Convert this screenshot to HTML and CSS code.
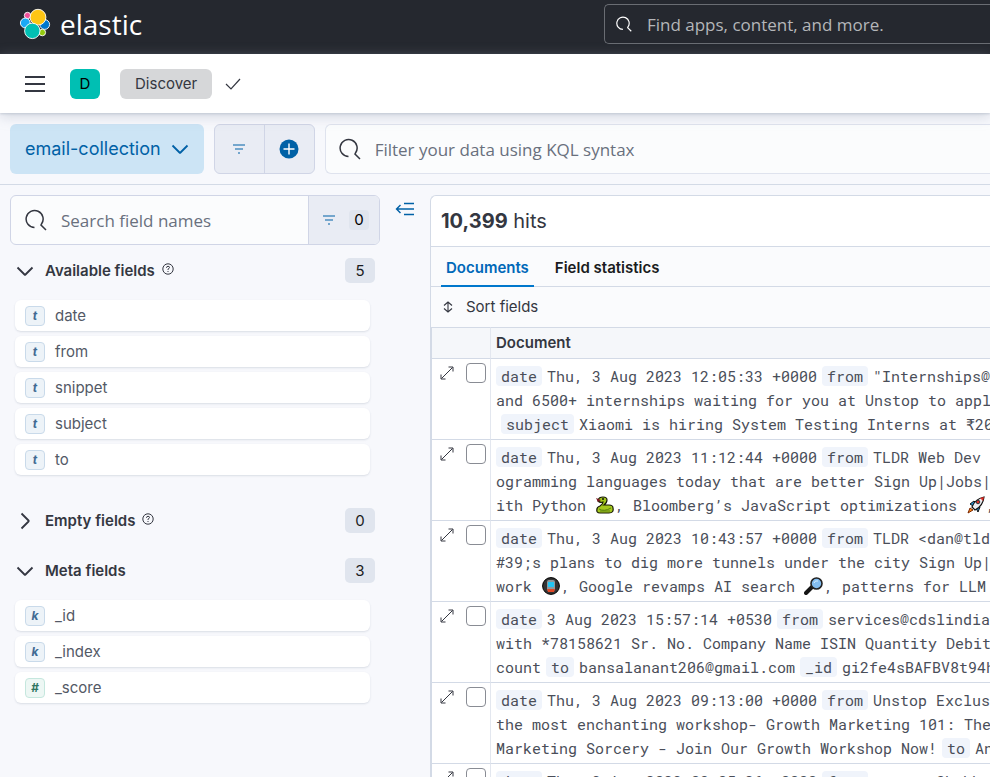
FILE: index.html
```html
<!DOCTYPE html>
<html lang="en">
<head>
<meta charset="utf-8">
<title>Discover - Elastic</title>
<link rel="stylesheet" href="styles.css">
</head>
<body>
<svg class="defs" aria-hidden="true">
  <symbol id="magnifier" viewBox="0 0 22 22"><path d="M9.500 18.500A8.500 8.500 0 1 1 16.500 15L16 16L21 21" /></symbol>
  <symbol id="chevron" viewBox="0 0 18 18"><path d="M1.500 5.500L8.500 12.500Q9 13 9.500 12.500L16.500 5.500" /></symbol>
  <symbol id="filter" viewBox="0 0 14 12"><path d="M1 2H13M3 6H11M6 10H8" /></symbol>
  <symbol id="help" viewBox="0 0 12 12"><circle cx="6" cy="6" r="5.200" /><path d="M4.500 4.800Q4.500 3.300 6 3.300Q7.500 3.300 7.500 4.500Q7.500 5.300 6 6.200V7M6 8V9" /></symbol>
  <symbol id="expand" viewBox="0 0 14 14"><path d="M8.500 1H13V5.500M5.500 13H1V8.500M12.500 1.500L1.500 12.500" /></symbol>
  <symbol id="snake" viewBox="0 0 20 18"><path d="M3 4Q4 1 8 1Q12 1 12 4Q12 7 9 9H14Q18 9 18 12Q19 17 14 17H5Q1 17 2 13Q2 11 5 10Q8 8 8 6Q5 7 3 5Z" fill="#a4c91c" stroke="#171a05" stroke-width="1.200"/><path d="M4 13Q9 16 16 12M5 15H15" fill="none" stroke="#5c8210"/><path d="M1 2L6 4L3 6Z" fill="#7a1622"/><circle cx="8" cy="3" r="1" fill="#111"/></symbol>
  <symbol id="rocket" viewBox="0 0 20 18"><path d="M4 8L8 5L14 11L12 16L10 12L7 10Z" fill="#2496d8" stroke="#111"/><path d="M6 11Q9 3 18 1Q17 10 9 14Z" fill="#eceff2" stroke="#111" stroke-width="1.200"/><path d="M14 2L18 1L17 5Z" fill="#df3028"/><circle cx="12" cy="6" r="1.800" fill="#df3028" stroke="#333"/><path d="M2 17L4 12L7 14Z" fill="#ff8c17" stroke="#7a2500"/></symbol>
  <symbol id="train" viewBox="0 0 20 18"><circle cx="10" cy="9" r="8.400" fill="#333" stroke="#000"/><rect x="6" y="3" width="8" height="11" rx="2" fill="#8d989c"/><rect x="7" y="5" width="6" height="5" fill="#22c5f3"/><path d="M6 12H14L13 15H7Z" fill="#e04726"/></symbol>
  <symbol id="lens" viewBox="0 0 20 18"><path d="M8 10L2 16" stroke="#151515" stroke-width="4" stroke-linecap="round"/><circle cx="12.500" cy="6.500" r="5.500" fill="#83bdf0" stroke="#222" stroke-width="1.600"/><path d="M10 6Q11 3 14 4" fill="none" stroke="#d5edff"/></symbol>
</svg>

<header class="topbar">
  <a class="brand" href="#">
    <svg class="brand-mark" viewBox="0 0 30 30" aria-hidden="true">
      <g stroke="#fff" stroke-width="0.900">
        <circle cx="7.500" cy="6.500" r="3.200" fill="#f04e98"/>
        <circle cx="5.300" cy="14" r="4.900" fill="#1ba9f5"/>
        <circle cx="24.700" cy="15.500" r="4.900" fill="#0077cc"/>
        <circle cx="22.300" cy="23.500" r="3.300" fill="#93c90e"/>
        <circle cx="18" cy="8.200" r="7.900" fill="#fec514"/>
        <circle cx="12.300" cy="21.900" r="7.700" fill="#00bfb3"/>
      </g>
    </svg>
    <span class="brand-name">elastic</span>
  </a>
  <label class="global-search">
    <svg class="icon icon-16" aria-hidden="true"><use href="#magnifier"/></svg>
    <input type="search" aria-label="Find apps" placeholder="Find apps, content, and more.">
  </label>
</header>

<nav class="navbar">
  <button class="menu" aria-label="Menu"><svg viewBox="0 0 20 16" aria-hidden="true"><path d="M0 1H20M0 8H20M0 15H20"/></svg></button>
  <button class="space">D</button>
  <a class="crumb" href="#">Discover</a>
  <button class="check" aria-label="Saved"><svg class="icon icon-16" viewBox="0 0 16 16" aria-hidden="true"><path d="M1 8L6 13L15 3"/></svg></button>
</nav>

<section class="querybar">
  <button class="dataview">email-collection<svg class="icon icon-18" aria-hidden="true"><use href="#chevron"/></svg></button>
  <div class="filter-group">
    <button aria-label="Filter menu"><svg class="icon icon-14" aria-hidden="true"><use href="#filter"/></svg></button>
    <button aria-label="Add filter"><svg class="plus" viewBox="0 0 20 20" aria-hidden="true"><circle cx="10" cy="10" r="9.500"/><path d="M10 4.500V15.500M4.500 10H15.500"/></svg></button>
  </div>
  <label class="kql">
    <svg class="icon icon-22" aria-hidden="true"><use href="#magnifier"/></svg>
    <input type="search" aria-label="Query" placeholder="Filter your data using KQL syntax">
  </label>
</section>

<main class="workspace">
  <aside class="sidebar">
    <div class="field-search">
      <label>
        <svg class="icon icon-22" aria-hidden="true"><use href="#magnifier"/></svg>
        <input type="search" aria-label="Field names" placeholder="Search field names">
      </label>
      <button aria-label="Filter by type"><svg class="icon icon-14" aria-hidden="true"><use href="#filter"/></svg><span class="count">0</span></button>
    </div>

    <section class="group">
      <button class="group-head"><svg class="icon icon-18" aria-hidden="true"><use href="#chevron"/></svg><span>Available fields</span><svg class="icon help" aria-hidden="true"><use href="#help"/></svg><span class="badge">5</span></button>
      <ul>
        <li><span class="type">t</span>date</li>
        <li><span class="type">t</span>from</li>
        <li><span class="type">t</span>snippet</li>
        <li><span class="type">t</span>subject</li>
        <li><span class="type">t</span>to</li>
      </ul>
    </section>
    <section class="group">
      <button class="group-head closed"><svg class="icon icon-18" aria-hidden="true"><use href="#chevron"/></svg><span>Empty fields</span><svg class="icon help" aria-hidden="true"><use href="#help"/></svg><span class="badge">0</span></button>
    </section>
    <section class="group">
      <button class="group-head"><svg class="icon icon-18" aria-hidden="true"><use href="#chevron"/></svg><span>Meta fields</span><span class="badge">3</span></button>
      <ul>
        <li><span class="type">k</span>_id</li>
        <li><span class="type">k</span>_index</li>
        <li><span class="type number">#</span>_score</li>
      </ul>
    </section>
  </aside>

  <button class="collapse" aria-label="Collapse sidebar"><svg viewBox="0 0 20 14" aria-hidden="true"><path d="M9 1.500H19M2 7H19M9 12.500H19M5.500 3L1.500 7L5.500 11"/></svg></button>

  <section class="results">
    <h1 class="hits"><strong>10,399</strong> hits</h1>
    <div class="tabs">
      <button class="tab active">Documents</button>
      <button class="tab">Field statistics</button>
    </div>
    <div class="toolbar">
      <button><svg class="sort" viewBox="0 0 10 12" aria-hidden="true"><path d="M5 1V11M1 4.500L5 1L9 4.500M1 7.500L5 11L9 7.500"/></svg>Sort fields</button>
    </div>
    <table class="grid">
      <thead>
        <tr><th class="control" aria-label="Controls"></th><th>Document</th></tr>
      </thead>
      <tbody>
        <tr>
          <td class="control"><div class="tools"><button aria-label="Expand"><svg class="icon icon-14" aria-hidden="true"><use href="#expand"/></svg></button><input type="checkbox" aria-label="Select row 1"></div></td>
          <td class="doc"><p><b>date</b>Thu, 3 Aug 2023 12:05:33 +0000<b>from</b>"Internships@</p><p>and 6500+ internships waiting for you at Unstop to appl</p><p><b>subject</b>Xiaomi is hiring System Testing Interns at ₹20</p></td>
        </tr>
        <tr>
          <td class="control"><div class="tools"><button aria-label="Expand"><svg class="icon icon-14" aria-hidden="true"><use href="#expand"/></svg></button><input type="checkbox" aria-label="Select row 2"></div></td>
          <td class="doc"><p><b>date</b>Thu, 3 Aug 2023 11:12:44 +0000<b>from</b>TLDR Web Dev </p><p>ogramming languages today that are better Sign Up|Jobs|</p><p>ith Python <svg class="emoji" aria-hidden="true"><use href="#snake"/></svg>, Bloomberg’s JavaScript optimizations <svg class="emoji" aria-hidden="true"><use href="#rocket"/></svg>,</p></td>
        </tr>
        <tr>
          <td class="control"><div class="tools"><button aria-label="Expand"><svg class="icon icon-14" aria-hidden="true"><use href="#expand"/></svg></button><input type="checkbox" aria-label="Select row 3"></div></td>
          <td class="doc"><p><b>date</b>Thu, 3 Aug 2023 10:43:57 +0000<b>from</b>TLDR &lt;dan@tld</p><p>#39;s plans to dig more tunnels under the city Sign Up|</p><p>work <svg class="emoji" aria-hidden="true"><use href="#train"/></svg>, Google revamps AI search <svg class="emoji" aria-hidden="true"><use href="#lens"/></svg>, patterns for LLM</p></td>
        </tr>
        <tr>
          <td class="control"><div class="tools"><button aria-label="Expand"><svg class="icon icon-14" aria-hidden="true"><use href="#expand"/></svg></button><input type="checkbox" aria-label="Select row 4"></div></td>
          <td class="doc"><p><b>date</b>3 Aug 2023 15:57:14 +0530<b>from</b>services@cdslindia</p><p>with *78158621 Sr. No. Company Name ISIN Quantity Debit</p><p>count<b>to</b>bansalanant206@gmail.com<b>_id</b>gi2fe4sBAFBV8t94h</p></td>
        </tr>
        <tr>
          <td class="control"><div class="tools"><button aria-label="Expand"><svg class="icon icon-14" aria-hidden="true"><use href="#expand"/></svg></button><input type="checkbox" aria-label="Select row 5"></div></td>
          <td class="doc"><p><b>date</b>Thu, 3 Aug 2023 09:13:00 +0000<b>from</b>Unstop Exclus</p><p>the most enchanting workshop- Growth Marketing 101: The</p><p>Marketing Sorcery - Join Our Growth Workshop Now!<b>to</b>An</p></td>
        </tr>
        <tr>
          <td class="control"><div class="tools"><button aria-label="Expand"><svg class="icon icon-14" aria-hidden="true"><use href="#expand"/></svg></button><input type="checkbox" aria-label="Select row 6"></div></td>
          <td class="doc"><p><b>date</b>Thu, 3 Aug 2023 09:05:26 +0000<b>from</b>serene Shubh</p></td>
        </tr>
      </tbody>
    </table>
  </section>
</main>
</body>
</html>
```
FILE: styles.css
```css
* { box-sizing: border-box; }

html { background: #fff; }

body {
  margin: 0 2px 0 0;
  height: 100vh;
  overflow: hidden;
  display: flex;
  flex-direction: column;
  background: #f7f8fc;
  color: #343741;
  font: 15px/24px Inter, "Liberation Sans", sans-serif;
}

button, input { font: inherit; color: inherit; }
button { border: 0; padding: 0; background: none; display: flex; align-items: center; }
a { color: inherit; text-decoration: none; }
ul, p, h1 { margin: 0; padding: 0; list-style: none; }
svg { display: block; flex: none; overflow: visible; }
.defs { position: absolute; width: 0; height: 0; }

.icon { fill: none; stroke: currentColor; stroke-width: 1.2; }
.icon-14 { width: 14px; height: 14px; }
.icon-16 { width: 16px; height: 16px; }
.icon-18 { width: 18px; height: 18px; stroke-width: 1.8; }
.icon-22 { width: 22px; height: 22px; stroke-width: 1.5; }

input[type="search"] {
  appearance: none;
  flex: 1;
  min-width: 0;
  border: 0;
  outline: 0;
  padding: 2px 0 0;
  background: none;
  font: 17px/24px "Segoe UI", "Open Sans", sans-serif;
}
input::placeholder { color: #69707d; opacity: 1; }

.topbar {
  flex: none;
  height: 54px;
  display: flex;
  justify-content: space-between;
  background: #25282f;
  color: #fff;
}
.brand { display: flex; align-items: center; gap: 10px; padding: 0 0 6px 20px; }
.brand-mark { width: 30px; height: 30px; }
.brand-name { font: 28px/32px "Open Sans", sans-serif; }
.global-search {
  width: 39%;
  height: 40px;
  margin-top: 4px;
  display: flex;
  align-items: center;
  gap: 15px;
  padding-left: 11px;
  border: 1px solid #6a6d73;
  border-right: 0;
  border-radius: 5px 0 0 5px;
}
.global-search .icon { stroke-width: 1.6; }
.global-search input::placeholder { color: #b4b6b9; }

.navbar {
  flex: none;
  height: 59px;
  display: flex;
  align-items: center;
  padding-left: 25px;
  background: #fff;
  box-shadow: 0 1px 2px #98a2b366, 0 3px 12px #98a2b366;
  z-index: 1;
}
.menu svg { width: 20px; height: 16px; stroke: #343741; stroke-width: 2; }
.space {
  width: 30px;
  height: 30px;
  margin: 0 20px 0 25px;
  justify-content: center;
  border-radius: 6px;
  background: #00bfb3;
  color: #000;
}
.crumb { padding: 3px 15px; border-radius: 6px; background: #d6d7d9; }
.check { margin-left: 13px; }

.querybar {
  flex: none;
  display: flex;
  gap: 10px;
  padding: 11px 0 10px 10px;
  border-bottom: 1px solid #d3dae6;
}
.dataview {
  height: 50px;
  padding: 0 15px;
  gap: 10px;
  border-radius: 6px;
  background: #cce4f5;
  color: #0061a6;
  font-size: 18px;
}
.filter-group {
  display: flex;
  border: 1px solid #d0d5e6;
  border-radius: 6px;
  background: #e9ecf4;
  color: #0061a6;
}
.filter-group button { width: 49px; justify-content: center; }
.filter-group button + button { width: 50px; border-left: 1px solid #d0d5e6; }
.plus { width: 20px; height: 20px; fill: #0061a6; stroke: #fff; stroke-width: 1.4; }
.plus circle { stroke: none; }
.kql {
  flex: 1;
  display: flex;
  align-items: center;
  gap: 14px;
  padding-left: 13px;
  border: 1px solid #dfe3ee;
  border-right: 0;
  border-radius: 6px 0 0 6px;
  background: #fbfcfd;
}

.workspace { flex: 1; min-height: 0; display: flex; align-items: stretch; padding-top: 10px; }

.sidebar { width: 380px; flex: none; padding-left: 10px; }
.field-search {
  height: 50px;
  display: flex;
  border: 1px solid #d0d5e6;
  border-radius: 6px;
  background: #fbfcfd;
  overflow: hidden;
}
.field-search label { flex: 1; display: flex; align-items: center; gap: 14px; padding-left: 14px; }
.field-search button {
  width: 71px;
  gap: 13px;
  padding-left: 13px;
  border-left: 1px solid #d0d5e6;
  background: #e9ecf4;
  color: #0061a6;
}
.count {
  width: 20px;
  line-height: 20px;
  border-radius: 4px;
  background: #e0e5ee;
  color: #000;
  text-align: center;
}

.group { padding: 13px 5px 0 5px; }
.group-head { width: 100%; height: 25px; font-weight: 600; }
.group-head .icon-18 { margin: 0 11px 0 1px; }
.closed .icon-18 { transform: rotate(-90deg); }
.help { width: 12px; height: 12px; margin: 0 0 4px 7px; stroke-width: 1; }
.badge {
  width: 30px;
  margin-left: auto;
  border-radius: 5px;
  background: #e0e5ee;
  color: #1a1c21;
  font-weight: 400;
  line-height: 25px;
  text-align: center;
}
.group ul { display: grid; gap: 5px; padding: 17px 5px 8px 0; }
.group li {
  height: 31px;
  display: flex;
  align-items: center;
  gap: 10px;
  padding-left: 10px;
  border-radius: 6px;
  background: #fff;
  box-shadow: 0 1px 2px #98a2b34d;
  color: #535966;
}
.group + .group { padding-top: 25px; }
.type {
  width: 20px;
  border: 1px solid #c9daea;
  border-radius: 4px;
  background: #edf3f8;
  color: #416a92;
  font: italic 700 12px/18px Inter, sans-serif;
  text-align: center;
}
.number { border-color: #c5e7de; background: #edf7f4; color: #2f7561; }

.collapse { width: 50px; flex: none; align-self: flex-start; justify-content: center; padding-top: 7px; }
.collapse svg { width: 20px; height: 14px; fill: none; stroke: #0061a6; stroke-width: 1.4; }

.results {
  flex: 1;
  min-width: 0;
  overflow: hidden;
  border: 1px solid #d3dae6;
  border-width: 1px 0 0 1px;
  border-top-left-radius: 6px;
  background: #fff;
}
.hits { padding: 10px; font-size: 20px; font-weight: 400; line-height: 30px; }
.hits strong { font-weight: 700; }
.tabs {
  height: 41px;
  display: flex;
  gap: 16px;
  padding-left: 10px;
  border: 1px solid #d3dae6;
  border-width: 1px 0;
  background: #fafbfd;
}
.tab { height: 40px; padding: 1px 5px 0; font-weight: 600; color: #1a1c21; }
.active { padding-top: 3px; color: #0068b8; border-bottom: 2px solid #0077cc; }
.toolbar { height: 40px; display: flex; padding-left: 12px; background: #fafbfd; }
.toolbar button { gap: 13px; }
.sort { width: 10px; height: 12px; fill: none; stroke: currentColor; stroke-width: 1.1; }

.grid {
  width: 100%;
  table-layout: fixed;
  border-collapse: separate;
  border-spacing: 0;
  border-left: 1px solid #d3dae6;
}
.grid th, .grid td { border-bottom: 1px solid #d3dae6; vertical-align: top; }
.grid th {
  height: 32px;
  padding: 3px 5px;
  border-top: 1px solid #d3dae6;
  background: #f5f7fa;
  font-weight: 600;
  text-align: left;
}
.grid .control { width: 59px; border-right: 1px solid #e3e7ef; padding: 0; }
.tools { display: flex; align-items: center; gap: 12px; padding: 4px 0 0 8px; }
.tools .icon { stroke-width: 1; }
.tools input {
  appearance: none;
  width: 20px;
  height: 20px;
  margin: 0;
  border: 1px solid #898c94;
  border-radius: 4px;
  background: #fff;
}
.doc { height: 81px; padding: 5px 0 3px 5px; overflow: hidden; color: #4a4e59; }
.doc p { font: 15px/24px "Roboto Mono", "Liberation Mono", monospace; white-space: pre; }
.doc b {
  display: inline-block;
  margin: 0 5px;
  padding: 0 5px;
  border-radius: 4px;
  background: #f0f4fb;
  font-weight: 400;
  line-height: 20px;
}
.doc p:first-child b:first-child { margin-left: 0; }
.emoji { display: inline-block; width: 20px; height: 18px; vertical-align: -3px; }
```
